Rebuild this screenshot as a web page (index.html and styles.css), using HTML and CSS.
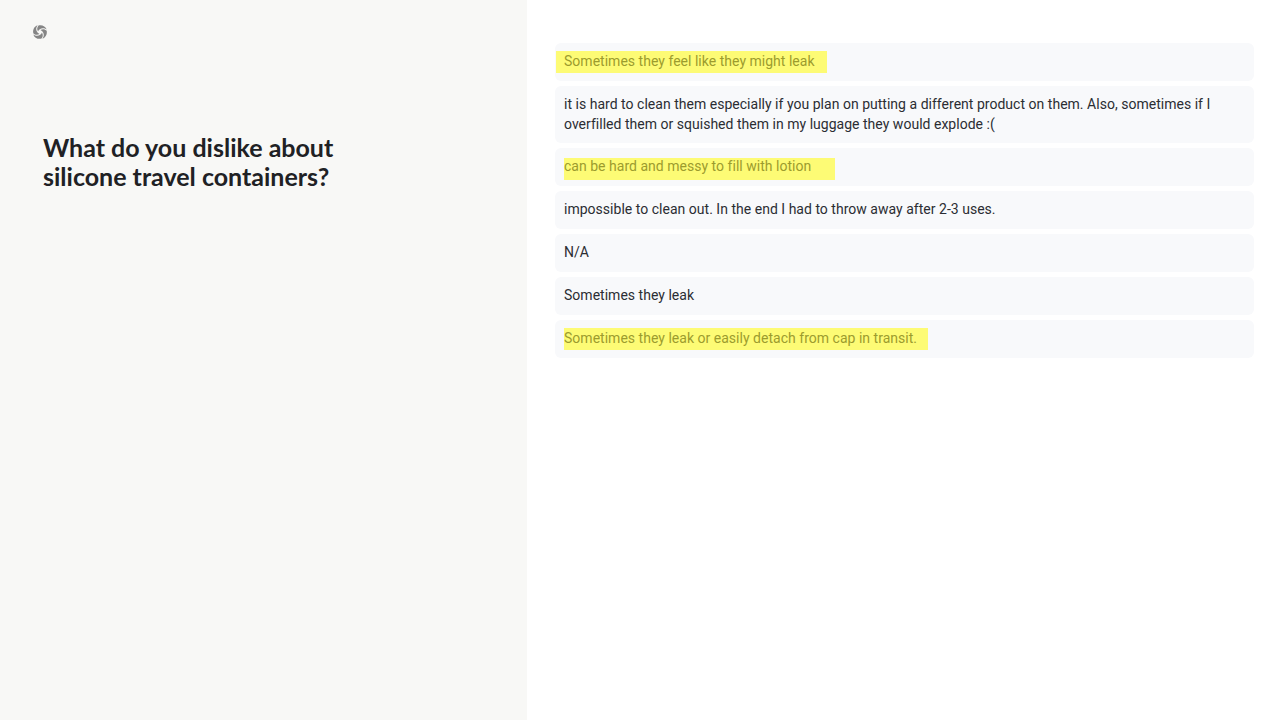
FILE: index.html
```html
<!DOCTYPE html>
<html lang="en">
<head>
<meta charset="utf-8">
<title>Survey question</title>
<link rel="stylesheet" href="styles.css">
</head>
<body>
<div class="slide">
  <aside class="side">
    <svg class="logo" width="16" height="16" viewBox="0 0 16 16" aria-hidden="true">
      <g fill="#858585">
        <path d="M6.800 1.300C10.300.6 13.600 2.300 14.700 5.600C12.700 3.900 9.800 3.700 7.800 5.300C7 6 6.300 6.800 6 7.600C4.700 5.300 5 3 6.800 1.300Z"/>
        <path d="M6.800 1.300C10.300.6 13.600 2.300 14.700 5.600C12.700 3.900 9.800 3.700 7.800 5.300C7 6 6.300 6.800 6 7.600C4.700 5.300 5 3 6.800 1.300Z" transform="rotate(90 8 8)"/>
        <path d="M6.800 1.300C10.300.6 13.600 2.300 14.700 5.600C12.700 3.900 9.800 3.700 7.800 5.300C7 6 6.300 6.800 6 7.600C4.700 5.300 5 3 6.800 1.300Z" transform="rotate(180 8 8)"/>
        <path d="M6.800 1.300C10.300.6 13.600 2.300 14.700 5.600C12.700 3.900 9.800 3.700 7.800 5.300C7 6 6.300 6.800 6 7.600C4.700 5.300 5 3 6.800 1.300Z" transform="rotate(270 8 8)"/>
      </g>
    </svg>
    <h1 class="title">What do you dislike about<br>silicone travel containers?</h1>
  </aside>
  <main class="main">
    <ul class="answers">
      <li class="answer"><span class="mark mark-a"></span><span class="hl">Sometimes they feel like they might leak</span></li>
      <li class="answer">it is hard to clean them especially if you plan on putting a different product on them. Also, sometimes if I overfilled them or squished them in my luggage they would explode :(</li>
      <li class="answer"><span class="mark mark-b"></span><span class="hl">can be hard and messy to fill with lotion</span></li>
      <li class="answer">impossible to clean out. In the end I had to throw away after 2-3 uses.</li>
      <li class="answer">N/A</li>
      <li class="answer">Sometimes they leak</li>
      <li class="answer"><span class="mark mark-c"></span><span class="hl">Sometimes they leak or easily detach from cap in transit.</span></li>
    </ul>
  </main>
</div>
</body>
</html>
```
FILE: styles.css
```css
* { box-sizing: border-box; }
html, body { margin: 0; padding: 0; }
body { background: #fff; overflow: hidden; }
.slide { display: flex; width: 1280px; height: 720px; }
.side { width: 527px; background: #f8f8f6; padding: 24px 0 0 32px; }
.logo { display: block; }
.title {
  margin: 93px 0 0 11px;
  font: 700 25px/29px Lato, sans-serif;
  color: #202124;
}
.main { flex: 1; padding: 43px 26px 0 28px; }
.answers { list-style: none; margin: 0; padding: 0; display: flex; flex-direction: column; gap: 5px; }
.answer {
  position: relative;
  min-height: 38px;
  padding: 9px;
  background: #f8f9fb;
  border-radius: 6px;
  font: 400 14px/19.500px Roboto, sans-serif;
  letter-spacing: .02px;
  color: #2b2d33;
}
.mark { position: absolute; height: 22px; background: #fdfb75; }
.hl { position: relative; color: #9c9b2e; }
.mark-a { left: 1px; top: 8px; width: 271px; }
.mark-b { left: 9px; top: 10px; width: 271px; }
.mark-c { left: 9px; top: 8px; width: 364px; }
```
